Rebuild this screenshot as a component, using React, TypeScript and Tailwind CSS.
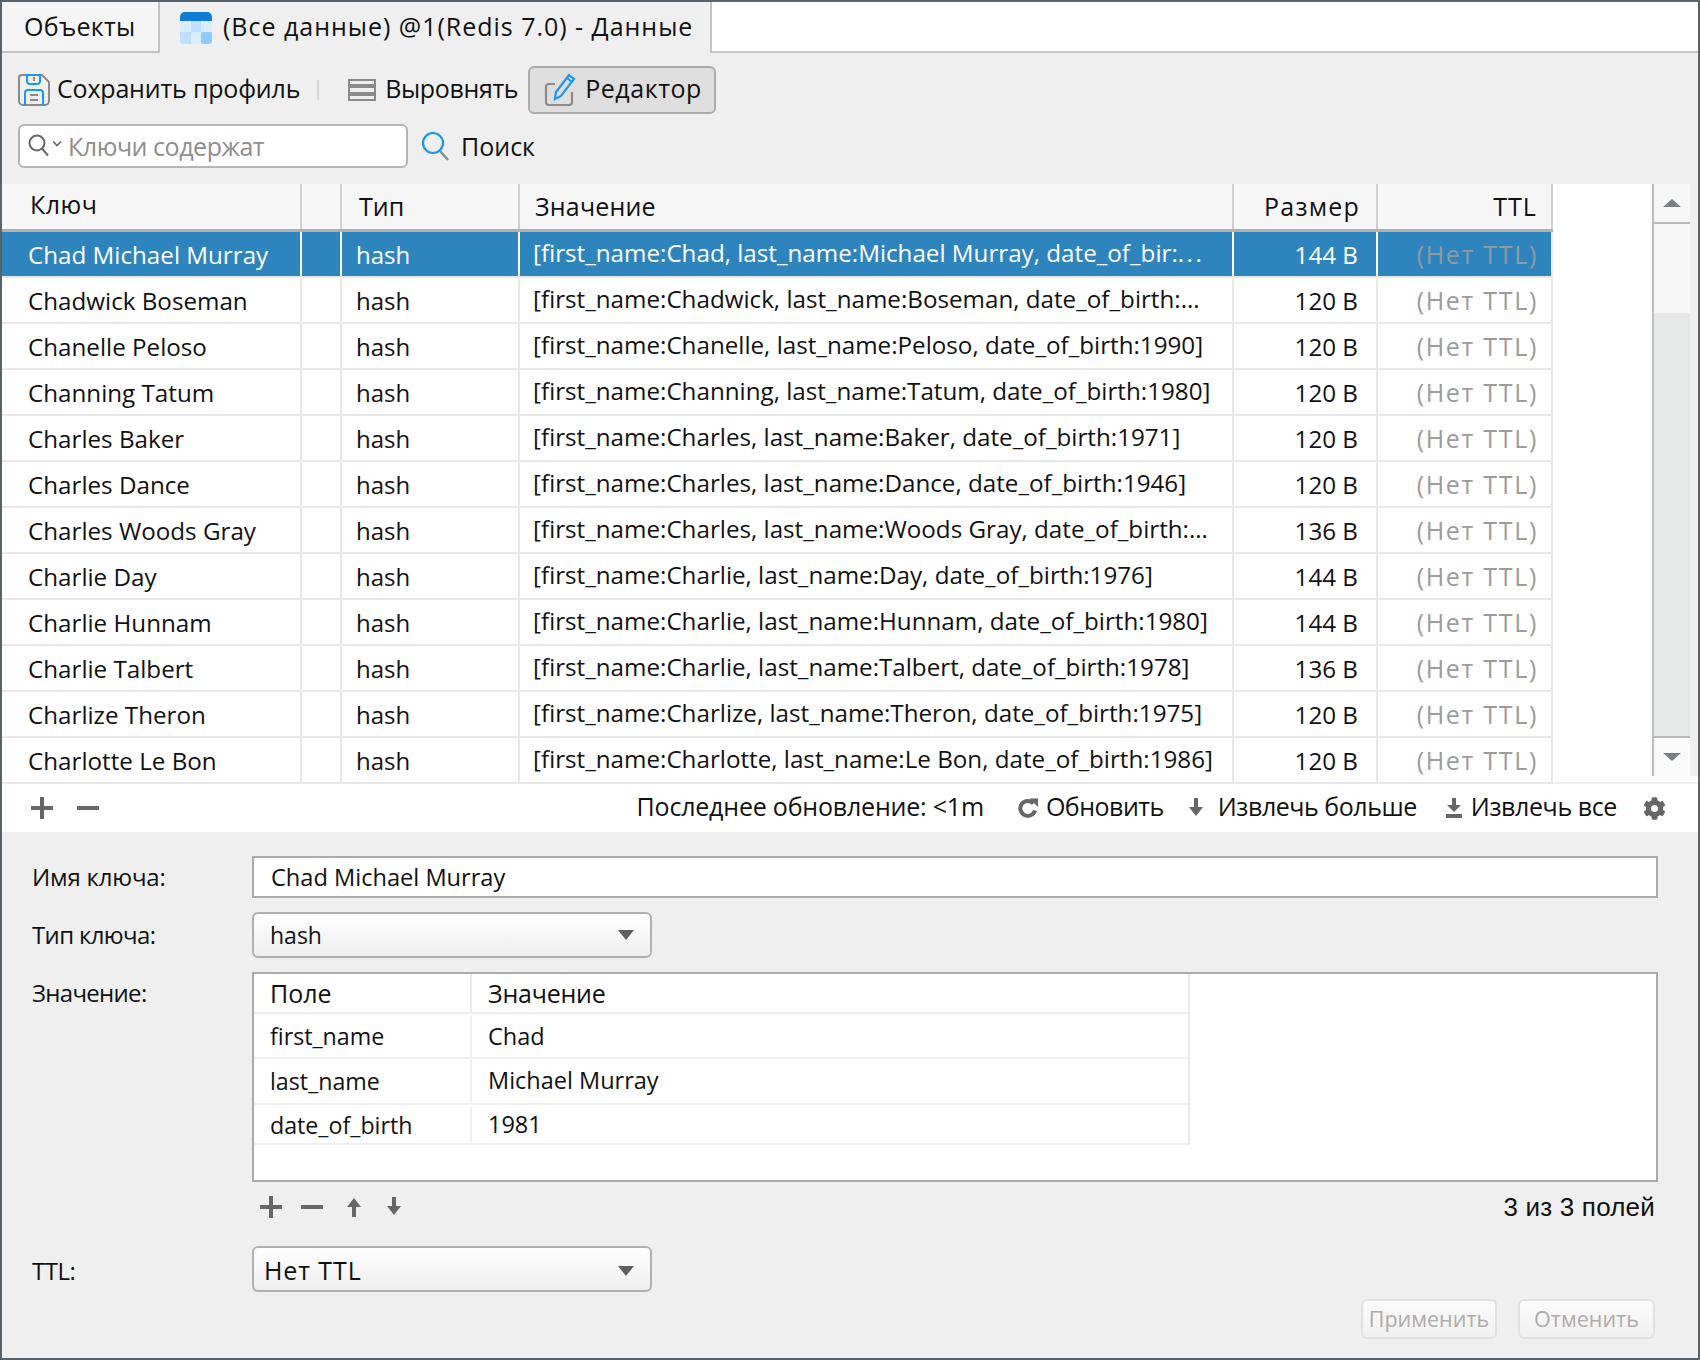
import React from "react";
import { FaCog } from "react-icons/fa";

const rows = [
  ["Chad Michael Murray", "[first_name:Chad, last_name:Michael Murray, date_of_bir:", "144 B"],
  ["Chadwick Boseman", "[first_name:Chadwick, last_name:Boseman, date_of_birth:…", "120 B"],
  ["Chanelle Peloso", "[first_name:Chanelle, last_name:Peloso, date_of_birth:1990]", "120 B"],
  ["Channing Tatum", "[first_name:Channing, last_name:Tatum, date_of_birth:1980]", "120 B"],
  ["Charles Baker", "[first_name:Charles, last_name:Baker, date_of_birth:1971]", "120 B"],
  ["Charles Dance", "[first_name:Charles, last_name:Dance, date_of_birth:1946]", "120 B"],
  ["Charles Woods Gray", "[first_name:Charles, last_name:Woods Gray, date_of_birth:…", "136 B"],
  ["Charlie Day", "[first_name:Charlie, last_name:Day, date_of_birth:1976]", "144 B"],
  ["Charlie Hunnam", "[first_name:Charlie, last_name:Hunnam, date_of_birth:1980]", "144 B"],
  ["Charlie Talbert", "[first_name:Charlie, last_name:Talbert, date_of_birth:1978]", "136 B"],
  ["Charlize Theron", "[first_name:Charlize, last_name:Theron, date_of_birth:1975]", "120 B"],
  ["Charlotte Le Bon", "[first_name:Charlotte, last_name:Le Bon, date_of_birth:1986]", "120 B"],
];

const fields = [
  ["first_name", "Chad", "h-[45px] pt-[2px]"],
  ["last_name", "Michael Murray", "h-[46px]"],
  ["date_of_birth", "1981", "h-[40px] pt-[2px]"],
];

const Plus = () => (
  <svg width="22" height="22" viewBox="0 0 22 22" className="fill-[#666666] shrink-0"><rect x="9" y="0" width="4" height="22" /><rect x="0" y="9" width="22" height="4" /></svg>
);
const Minus = () => (
  <svg width="22" height="22" viewBox="0 0 22 22" className="fill-[#666666] shrink-0"><rect x="0" y="9" width="22" height="4" /></svg>
);
const ArrowDown = ({ bar }: { bar?: boolean }) => (
  <svg width="16" height="20" viewBox="0 0 16 20" className="fill-[#666666] shrink-0">
    {bar ? <path d="M6 0h4v7h5l-7 7-7-7h5z" /> : <path d="M6 0h4v9h5l-7 9-7-9h5z" />}
    {bar && <rect x="0" y="16" width="16" height="4" />}
  </svg>
);
const ArrowUp = () => (
  <svg width="16" height="20" viewBox="0 0 16 20" className="fill-[#666666] shrink-0"><path d="M6 20h4V10h5L8 1 1 10h5z" /></svg>
);
const Caret = () => (
  <svg width="16" height="10" viewBox="0 0 16 10" className="fill-[#5f5f5f] shrink-0"><path d="M0 0h16L8 10z" /></svg>
);

const Select = ({ children, pl }: { children: React.ReactNode; pl: string }) => (
  <div className={`w-[400px] h-[46px] border-2 border-[#b0b0b0] rounded-[6px] bg-linear-to-b from-white to-[#eeeeee] flex items-center justify-between pr-[16px] ${pl}`}>
    <span className="flex items-center">{children}</span>
    <Caret />
  </div>
);

export default function App() {
  return (
    <div className="w-[1700px] h-[1360px] bg-[#efefef] border-2 border-[#56636b] flex flex-col text-[25px] text-[#111111] font-['Open_Sans','Noto_Sans',sans-serif] overflow-hidden">
      {/* Tabs */}
      <div className="h-[51px] shrink-0 flex bg-white">
        <div className="w-[158px] bg-[#f5f5f5] border-b-2 border-r-2 border-[#c4c4c4] flex items-center pl-[22px] tracking-[0.3px]">Объекты</div>
        <div className="w-[552px] bg-[#efefef] border-r-2 border-[#c4c4c4] flex items-center pl-[20px] gap-[11px]">
          <svg width="32" height="32" viewBox="0 0 32 32" className="shrink-0">
            <rect width="32" height="32" rx="5" fill="#a8d6fb" />
            <path d="M0 9V5a5 5 0 0 1 5-5h22a5 5 0 0 1 5 5v4z" fill="#0f7bd4" />
            <rect x="0" y="9" width="11" height="11" fill="#d9edfd" />
            <rect x="11" y="9" width="10" height="11" fill="#bfe0fb" />
            <rect x="21" y="9" width="11" height="11" fill="#d9edfd" />
            <rect x="0" y="20" width="11" height="12" rx="3" fill="#bfe0fb" />
            <rect x="11" y="20" width="10" height="12" fill="#d9edfd" />
            <rect x="21" y="20" width="11" height="12" rx="3" fill="#8fcbfa" />
          </svg>
          <span className="whitespace-nowrap tracking-[0.98px] pb-[1px]">(Все данные) @1(Redis 7.0) - Данные</span>
        </div>
        <div className="flex-1 border-b-2 border-[#c4c4c4]" />
      </div>

      {/* Toolbar */}
      <div className="h-[48px] mt-[13px] shrink-0 flex items-center pl-[16px]">
        <svg width="32" height="32" viewBox="0 0 32 32" fill="none" className="shrink-0">
          <path d="M4 1h20l7 7v19a4 4 0 0 1-4 4H5a4 4 0 0 1-4-4V4a3 3 0 0 1 3-3z" stroke="#8a8a8a" strokeWidth="2" />
          <path d="M9 1h13v6a3 3 0 0 1-3 3h-7a3 3 0 0 1-3-3z" stroke="#1e96f0" strokeWidth="2" />
          <path d="M16 3v4" stroke="#8a8a8a" strokeWidth="2" />
          <path d="M7 31V19a3 3 0 0 1 3-3h12a3 3 0 0 1 3 3v12" stroke="#1e96f0" strokeWidth="2" />
          <path d="M12 21h8M12 26h8" stroke="#8a8a8a" strokeWidth="2" />
        </svg>
        <span className="ml-[7px] whitespace-nowrap pb-[2px] tracking-[-0.19px]">Сохранить профиль</span>
        <div className="w-[2px] h-[20px] bg-[#d8d8d8] ml-[17px]" />
        <svg width="28" height="22" viewBox="0 0 28 22" className="ml-[29px] shrink-0" fill="#efefef" stroke="#8a8a8a" strokeWidth="2">
          <rect x="1" y="1" width="26" height="5" />
          <rect x="1" y="8" width="26" height="6" />
          <rect x="1" y="16" width="26" height="5" />
        </svg>
        <span className="ml-[9px] whitespace-nowrap pb-[2px] tracking-[-0.36px]">Выровнять</span>
        <div className="ml-[10px] w-[188px] h-[48px] bg-[#dedede] border-2 border-[#aaaaaa] rounded-[6px] flex items-center pl-[14px] gap-[9px]">
          <svg width="32" height="34" viewBox="0 0 32 34" fill="none" className="shrink-0">
            <path d="M11 11H5a3 3 0 0 0-3 3v15a3 3 0 0 0 3 3h20a3 3 0 0 0 3-3V19" stroke="#8a8a8a" strokeWidth="2.2" />
            <path d="M25 2l5 4-13 17-6 3 1-7z" stroke="#1e96f0" strokeWidth="2.2" />
            <path d="M23 5l5 4" stroke="#1e96f0" strokeWidth="2" />
          </svg>
          <span className="pb-[2px] tracking-[0.54px]">Редактор</span>
        </div>
      </div>

      {/* Search */}
      <div className="h-[44px] mt-[10px] shrink-0 flex items-center pl-[16px]">
        <div className="w-[390px] h-[44px] bg-white border-2 border-[#b4b4b4] rounded-[6px] flex items-center pl-[8px]">
          <svg width="24" height="24" viewBox="0 0 24 24" fill="none" stroke="#666666" strokeWidth="2" className="shrink-0">
            <circle cx="9" cy="9" r="7.5" /><path d="M14 14.5l6 7" />
          </svg>
          <svg width="10" height="8" viewBox="0 0 10 8" fill="none" stroke="#666666" strokeWidth="1.6" className="shrink-0 -mt-[4px]"><path d="M1 1.5l4 4 4-4" /></svg>
          <span className="ml-[6px] pt-[2px] text-[#8e8e8e] whitespace-nowrap tracking-[-0.46px]">Ключи содержат</span>
        </div>
        <svg width="30" height="30" viewBox="0 0 30 30" fill="none" className="ml-[13px] shrink-0">
          <circle cx="12" cy="12" r="10" stroke="#1a96ee" strokeWidth="2.2" />
          <path d="M19 20l8 9" stroke="#8c8c8c" strokeWidth="2.6" />
        </svg>
        <span className="ml-[10px] pt-[2px]">Поиск</span>
      </div>

      {/* Table */}
      <div className="mt-[16px] shrink-0 flex">
        <div className="w-[1551px] shrink-0">
          <div className="h-[48px] flex bg-[#f6f6f6] border-b-[3px] border-[#b0b0b0]">
            <div className="w-[300px] border-r-2 border-[#d0d0d0] pl-[28px] flex items-center pb-[3px] tracking-[0.5px]">Ключ</div>
            <div className="w-[40px] border-r-2 border-[#d0d0d0]" />
            <div className="w-[178px] border-r-2 border-[#d0d0d0] pl-[17px] flex items-center">Тип</div>
            <div className="w-[714px] border-r-2 border-[#d0d0d0] pl-[15px] flex items-center tracking-[0.2px]">Значение</div>
            <div className="w-[144px] border-r-2 border-[#d0d0d0] pr-[16px] flex items-center justify-end tracking-[1.2px]">Размер</div>
            <div className="flex-1 pr-[14px] border-r-2 border-[#d0d0d0] flex items-center justify-end tracking-[1.08px]">TTL</div>
          </div>
          {rows.map((r, i) => {
            const sel = i === 0;
            const cols = sel ? "border-white" : "border-[#e8e8e8]";
            return (
              <div key={r[0]} className={`h-[46px] flex border-b-2 border-b-[#e8e8e8] ${sel ? "bg-[#2e85bd] text-white" : "bg-white"}`}>
                <div className={`w-[300px] border-r-2 ${cols} pl-[26px] pt-[2px] flex items-center whitespace-nowrap text-[24.2px]`}>{r[0]}</div>
                <div className={`w-[40px] border-r-2 ${cols}`} />
                <div className={`w-[178px] border-r-2 ${cols} pl-[14px] pt-[2px] flex items-center text-[24px]`}>hash</div>
                <div className={`w-[714px] border-r-2 ${cols} pl-[13px] flex items-center whitespace-nowrap overflow-hidden pb-[2px] text-[24.2px]`}>
                  <span>{r[1]}</span>
                  {sel && <span className="tracking-[2.5px]">...</span>}
                </div>
                <div className={`w-[144px] border-r-2 ${cols} pr-[18px] pt-[2px] flex items-center justify-end text-[24.2px]`}>{r[2]}</div>
                <div className={`flex-1 pr-[13px] pt-[2px] border-r-2 border-r-[#e8e8e8] flex items-center justify-end tracking-[1.7px] ${sel ? "text-[#8f9aa3]" : "text-[#9c9c9c]"}`}>(Нет TTL)</div>
              </div>
            );
          })}
        </div>
        {/* right part with scrollbar */}
        <div className="flex-1 flex flex-col bg-white border-b-2 border-[#efefef]">
          <div className="h-[592px] flex">
            <div className="flex-1" />
            <div className="w-[38px] border-l-2 border-[#bdbdbd] flex flex-col bg-[#f6f6f6]">
              <div className="h-[40px] border-b-2 border-[#b8b8b8] flex items-center justify-center">
                <svg width="18" height="8" viewBox="0 0 18 8" className="fill-[#7a7e82]"><path d="M9 0l9 8H0z" /></svg>
              </div>
              <div className="h-[89px]" />
              <div className="flex-1 bg-[#e6e8e8] border-b-2 border-[#b8b8b8]" />
              <div className="h-[38px] bg-[#fafafa] flex items-center justify-center">
                <svg width="18" height="8" viewBox="0 0 18 8" className="fill-[#7a7e82]"><path d="M0 0h18L9 8z" /></svg>
              </div>
            </div>
            <div className="w-[8px] bg-[#efefef]" />
          </div>
        </div>
      </div>

      {/* Table footer */}
      <div className="h-[48px] shrink-0 bg-white flex items-center pl-[29px] pr-[32px]">
        <Plus />
        <div className="ml-[24px]"><Minus /></div>
        <div className="flex-1" />
        <span className="whitespace-nowrap pb-[2px] tracking-[-0.2px]">Последнее обновление: &lt;1m</span>
        <svg width="20" height="20" viewBox="0 0 20 20" fill="none" className="ml-[34px] shrink-0">
          <path d="M15.5 5.5A7.5 7.5 0 1 0 17 12.5" stroke="#666666" strokeWidth="4" />
          <path d="M11.5 0.5H20V9z" fill="#666666" />
        </svg>
        <span className="ml-[8px] pb-[2px] tracking-[-0.5px]">Обновить</span>
        <div className="ml-[24px]"><ArrowDown /></div>
        <span className="ml-[14px] pb-[2px] whitespace-nowrap tracking-[-0.46px]">Извлечь больше</span>
        <div className="ml-[29px]"><ArrowDown bar /></div>
        <span className="ml-[9px] pb-[2px] whitespace-nowrap tracking-[-0.4px]">Извлечь все</span>
        <FaCog className="ml-[26px] text-[#666666] text-[23px] shrink-0" />
      </div>

      {/* Form */}
      <div className="pl-[30px] pt-[24px] pr-[40px] flex flex-col">
        <div className="flex items-center h-[42px]">
          <div className="w-[220px] shrink-0 text-[24px] tracking-[-0.2px]">Имя ключа:</div>
          <div className="w-[1406px] h-[42px] bg-white border-2 border-[#aaaaaa] flex items-center pl-[17px] pt-[1px] text-[23.6px]">Chad Michael Murray</div>
        </div>
        <div className="flex items-center mt-[14px]">
          <div className="w-[220px] shrink-0 text-[24px] tracking-[-0.65px]">Тип ключа:</div>
          <Select pl="pl-[16px] text-[23px]">hash</Select>
        </div>
        <div className="flex mt-[14px]">
          <div className="w-[220px] shrink-0 pt-[3px] text-[24px] tracking-[-0.7px]">Значение:</div>
          <div className="w-[1406px] h-[210px] bg-white border-2 border-[#aaaaaa]">
            <div className="w-[936px] border-r-2 border-[#ebebeb]">
              <div className="h-[40px] flex border-b-2 border-[#ebebeb]">
                <div className="w-[218px] pl-[16px] pt-[2px] border-r-2 border-[#ebebeb] flex items-center">Поле</div>
                <div className="pl-[16px] pt-[2px] flex items-center tracking-[-0.2px]">Значение</div>
              </div>
              {fields.map((f) => (
                <div key={f[0]} className={`flex border-b-2 border-[#f0f0f0] ${f[2]}`}>
                  <div className="w-[218px] pl-[16px] border-r-2 border-[#f0f0f0] flex items-center text-[23.2px]">{f[0]}</div>
                  <div className="pl-[16px] flex items-center text-[23.5px]">{f[1]}</div>
                </div>
              ))}
            </div>
          </div>
        </div>
        <div className="flex items-center mt-[13px] h-[24px]">
          <div className="w-[228px] shrink-0" />
          <Plus />
          <div className="ml-[19px]"><Minus /></div>
          <div className="ml-[23px]"><ArrowUp /></div>
          <div className="ml-[24px]"><ArrowDown /></div>
          <div className="flex-1 text-right pr-[3px] font-['Liberation_Sans',sans-serif] text-[26px] tracking-[0.2px]">3 из 3 полей</div>
        </div>
        <div className="flex items-center mt-[27px]">
          <div className="w-[220px] shrink-0 pt-[3px] text-[24px] tracking-[-0.5px]">TTL:</div>
          <Select pl="pl-[10px] pt-[3px] tracking-[0.9px]">Нет TTL</Select>
        </div>
        <div className="flex justify-end gap-[21px] mt-[7px] pr-[3px]">
          <div className="w-[136px] h-[40px] pt-[1px] border-2 border-[#e0e0e0] rounded-[6px] bg-linear-to-b from-[#fbfbfb] to-[#f0f0f0] text-[#b0aba8] text-[21.5px] flex items-center justify-center">Применить</div>
          <div className="w-[137px] h-[40px] pt-[1px] border-2 border-[#e0e0e0] rounded-[6px] bg-linear-to-b from-[#fbfbfb] to-[#f0f0f0] text-[#b0aba8] text-[21.5px] flex items-center justify-center">Отменить</div>
        </div>
      </div>
    </div>
  );
}
